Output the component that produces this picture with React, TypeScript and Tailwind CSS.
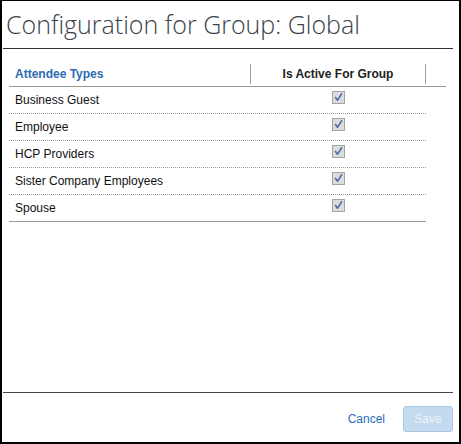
const rows = [
  'Business Guest',
  'Employee',
  'HCP Providers',
  'Sister Company Employees',
  'Spouse',
];

function CheckedBox() {
  return (
    <div className="w-[13px] h-[13px] border border-[#a3a3a3] bg-[#dcdcdc] flex items-center justify-center">
      <svg width="11" height="11" viewBox="0 0 11 11">
        <path d="M2.5 5.5 L4.6 8.2 L8.6 1.8" fill="none" stroke="#4a66ad" strokeWidth="1.6" strokeLinecap="round" strokeLinejoin="round" />
      </svg>
    </div>
  );
}

export default function App() {
  return (
    <div className="w-[461px] h-[444px] bg-white border-2 border-t border-black flex flex-col font-['Liberation_Sans',Arial,sans-serif] text-[12px]">
      <div className="ml-px mr-[6px] h-[48px] border-b border-[#333]">
        <h1 className="pt-[5px] pl-[3px] leading-[36px] text-[25px] font-light text-[#39424b] font-['Open_Sans',sans-serif]">
          Configuration for Group: Global
        </h1>
      </div>

      <div className="flex-1 pt-[13px] pl-[7px]">
        <div className="w-[437px] h-[25px] flex items-center border-b border-[#999]">
          <div className="w-[241px] pl-[6px] font-bold text-[#2b6cb3]">Attendee Types</div>
          <div className="w-px h-[20px] bg-[#a0a0a0]" />
          <div className="w-[174px] text-center font-bold text-[#222]">Is Active For Group</div>
          <div className="w-px h-[20px] bg-[#a0a0a0]" />
        </div>
        {rows.map((name, i) => (
          <div
            key={name}
            className={`w-[417px] h-[27px] flex border-b ${i === rows.length - 1 ? 'border-solid border-[#999]' : 'border-dotted border-[#9a9a9a]'}`}
          >
            <div className="w-[242px] pl-[6px] leading-[26px] text-[#111]">{name}</div>
            <div className="w-[174px] flex justify-center pt-[4px]">
              <CheckedBox />
            </div>
          </div>
        ))}
      </div>

      <div className="ml-px mr-[6px] border-t border-[#444] pt-[13px] pb-[10px] flex items-center justify-end gap-[18px]">
        <span className="text-[#2a6ebb]">Cancel</span>
        <button className="w-[50px] h-[26px] rounded-[3px] border border-[#a8c8e4] bg-[#c4daee] text-[#edf3f9] text-[12px]">
          Save
        </button>
      </div>
    </div>
  );
}
